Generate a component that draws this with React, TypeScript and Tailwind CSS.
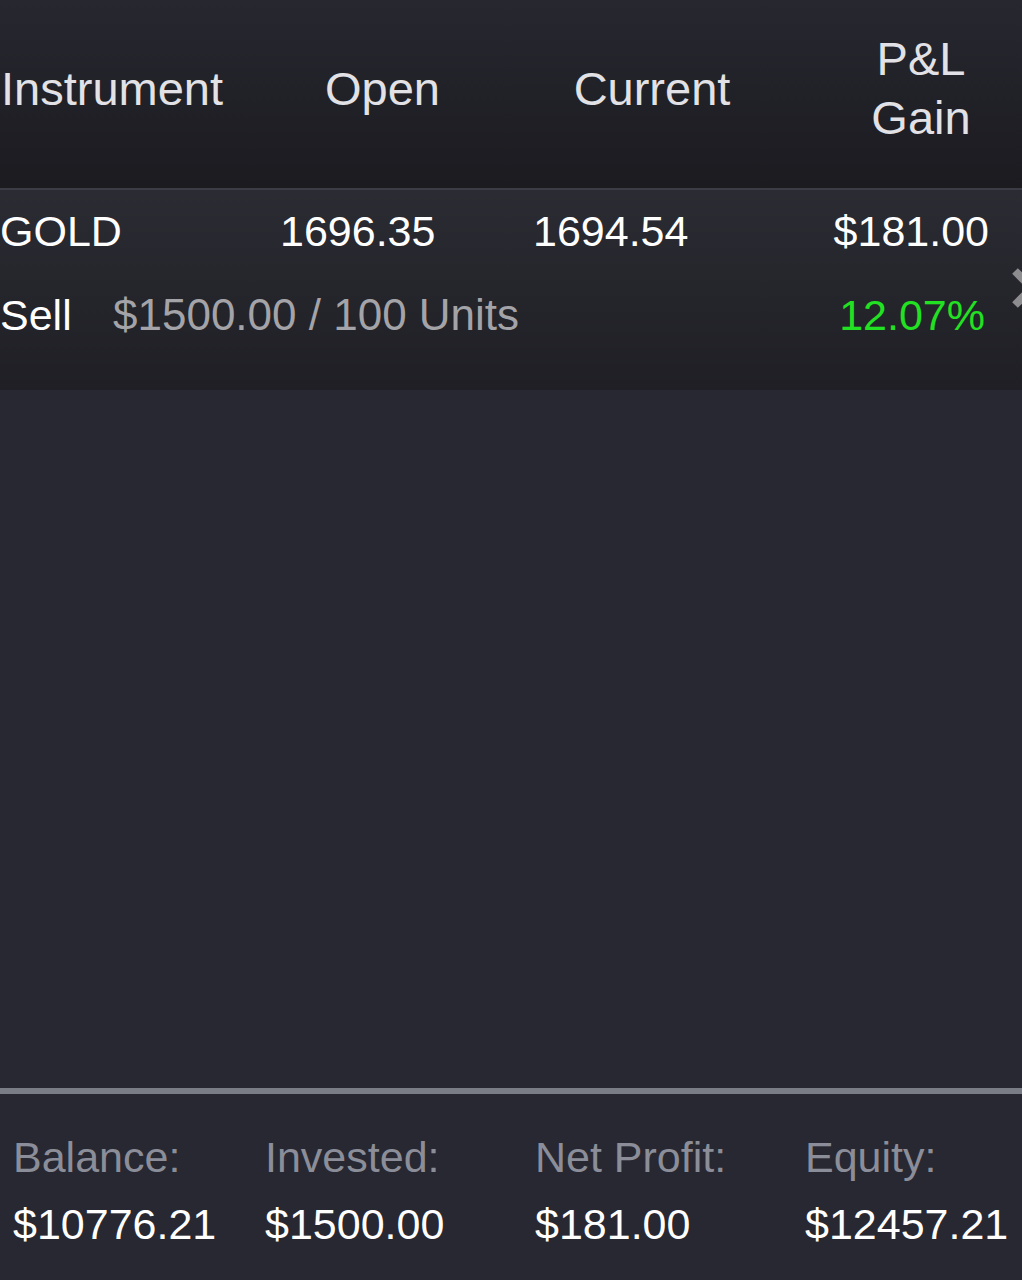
export default function App() {
  const font = { fontFamily: '"Liberation Sans", Arial, Helvetica, sans-serif' }

  return (
    <div className="w-[1022px] h-[1280px] flex flex-col bg-[#282832] overflow-hidden" style={font}>
      {/* Header */}
      <div className="h-[188px] flex items-center pb-[12px] bg-gradient-to-b from-[#272730] to-[#1b1b20] text-[#e2e2e6] text-[47px] leading-[59px]">
        <div className="w-[250px] pl-[1px]">Instrument</div>
        <div className="w-[265px] text-center">Open</div>
        <div className="w-[274px] text-center">Current</div>
        <div className="w-[31px]" />
        <div className="flex-1 text-center">
          <div>P&amp;L</div>
          <div>Gain</div>
        </div>
      </div>

      {/* Position row */}
      <div className="relative h-[202px] border-t-2 border-[#3c3c44] bg-gradient-to-b from-[#2b2b33] to-[#1f1f25] pt-[16px] text-[43px] leading-[50px]">
        <div className="flex text-white">
          <div className="w-[280px]">GOLD</div>
          <div className="w-[253px]">1696.35</div>
          <div className="flex-1">1694.54</div>
          <div className="pr-[33px]">$181.00</div>
        </div>
        <div className="flex mt-[34px]">
          <div className="w-[113px] text-white">Sell</div>
          <div className="flex-1 text-[#a3a3a8] text-[44px]">$1500.00 / 100 Units</div>
          <div className="pr-[37px] text-[#22e022]">12.07%</div>
        </div>
        <svg className="absolute right-[-32px] top-[76px]" width="44" height="44" viewBox="0 0 44 44">
          <path d="M5 5 L39 39 M39 5 L5 39" stroke="#8d8d8f" strokeWidth="8" strokeLinecap="butt" />
        </svg>
      </div>

      <div className="flex-1" />

      {/* Summary */}
      <div className="h-[192px] border-t-[6px] border-[#7a7d86] pt-[38px] text-[43px] leading-[50px]">
        <div className="flex pl-[13px]">
          <div className="w-[252px]">
            <div className="text-[#8b8e98]">Balance:</div>
            <div className="mt-[17px] text-white">$10776.21</div>
          </div>
          <div className="w-[270px]">
            <div className="text-[#8b8e98]">Invested:</div>
            <div className="mt-[17px] text-white">$1500.00</div>
          </div>
          <div className="w-[270px]">
            <div className="text-[#8b8e98]">Net Profit:</div>
            <div className="mt-[17px] text-white">$181.00</div>
          </div>
          <div className="flex-1">
            <div className="text-[#8b8e98]">Equity:</div>
            <div className="mt-[17px] text-white">$12457.21</div>
          </div>
        </div>
      </div>
    </div>
  )
}
